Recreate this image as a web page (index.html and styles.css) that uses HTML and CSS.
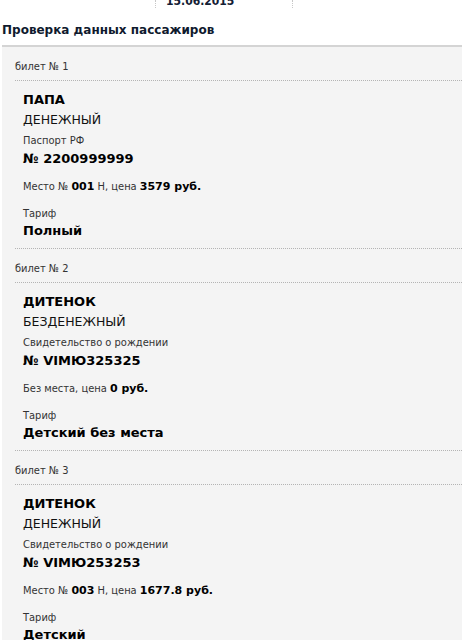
FILE: index.html
```html
<!DOCTYPE html>
<html lang="ru">
<head>
<meta charset="utf-8">
<title>Проверка данных пассажиров</title>
<link rel="stylesheet" href="styles.css">
</head>
<body>
<div class="top-row">
  <div class="cell cell-a"></div>
  <div class="cell cell-b"><span class="date">15.06.2015</span></div>
  <div class="cell cell-c"></div>
</div>
<h2 class="title">Проверка данных пассажиров</h2>
<div class="panel">
  <div class="ticket">
    <div class="ticket-head">билет № 1</div>
    <div class="ticket-body">
      <div class="name"><b>ПАПА</b><br>ДЕНЕЖНЫЙ</div>
      <div class="label doc-label">Паспорт РФ</div>
      <div class="value">№ 2200999999</div>
      <div class="seat">Место № <b>001</b> Н, цена <b>3579 руб.</b></div>
      <div class="label tariff-label">Тариф</div>
      <div class="value tariff">Полный</div>
    </div>
  </div>
  <div class="ticket">
    <div class="ticket-head">билет № 2</div>
    <div class="ticket-body">
      <div class="name"><b>ДИТЕНОК</b><br>БЕЗДЕНЕЖНЫЙ</div>
      <div class="label doc-label">Свидетельство о рождении</div>
      <div class="value">№ VIMЮ325325</div>
      <div class="seat">Без места, цена <b>0 руб.</b></div>
      <div class="label tariff-label">Тариф</div>
      <div class="value tariff">Детский без места</div>
    </div>
  </div>
  <div class="ticket">
    <div class="ticket-head">билет № 3</div>
    <div class="ticket-body">
      <div class="name"><b>ДИТЕНОК</b><br>ДЕНЕЖНЫЙ</div>
      <div class="label doc-label">Свидетельство о рождении</div>
      <div class="value">№ VIMЮ253253</div>
      <div class="seat">Место № <b>003</b> Н, цена <b>1677.8 руб.</b></div>
      <div class="label tariff-label">Тариф</div>
      <div class="value tariff">Детский</div>
    </div>
  </div>
</div>
</body>
</html>
```
FILE: styles.css
```css
html, body {
  margin: 0;
  padding: 0;
  background: #ffffff;
}
body {
  font-family: "DejaVu Sans Condensed", "DejaVu Sans", sans-serif;
  color: #222222;
  width: 462px;
  overflow: hidden;
}
.top-row {
  display: flex;
  height: 8px;
  overflow: hidden;
}
.cell {
  height: 8px;
}
.cell-a {
  width: 155px;
}
.cell-b {
  width: 137px;
  border-left: 1px dotted #c8c8c8;
  padding-left: 10px;
  box-sizing: border-box;
}
.cell-c {
  flex: 1;
  border-left: 1px dotted #c8c8c8;
}
.date {
  display: block;
  margin-top: -6px;
  font-weight: bold;
  font-size: 12px;
  line-height: 14px;
  color: #132035;
}
.title {
  margin: 0;
  padding: 14px 2px 7px;
  font-family: "DejaVu Sans", sans-serif;
  font-size: 12px;
  line-height: 16px;
  font-weight: bold;
  color: #0f1a2e;
}
.panel {
  margin-left: 2px;
  border-top: 2px solid #d4d4d4;
  background: #f4f4f4;
  padding-left: 13px;
}
.ticket-head {
  padding: 13px 0 7px;
  font-size: 11px;
  line-height: 13px;
  color: #333333;
  border-bottom: 1px dotted #b4b4b4;
}
.ticket-body {
  padding: 9px 0 8px 8px;
  border-bottom: 1px dotted #b4b4b4;
}
.name {
  font-family: "DejaVu Sans", sans-serif;
  font-size: 12.5px;
  line-height: 20px;
  color: #111111;
}
.name b {
  font-size: 13px;
  color: #000000;
}
.label {
  font-size: 11px;
  line-height: 14px;
  color: #333333;
}
.doc-label {
  margin-top: 4px;
}
.tariff-label {
  margin-top: 13px;
}
.value {
  margin-top: 2px;
  font-family: "DejaVu Sans", sans-serif;
  font-size: 13px;
  line-height: 18px;
  font-weight: bold;
  color: #000000;
}
.value.tariff {
  margin-top: 1px;
}
.seat {
  margin-top: 12px;
  font-size: 11px;
  line-height: 14px;
  color: #333333;
}
.seat b {
  font-family: "DejaVu Sans", sans-serif;
  color: #000000;
}
```
